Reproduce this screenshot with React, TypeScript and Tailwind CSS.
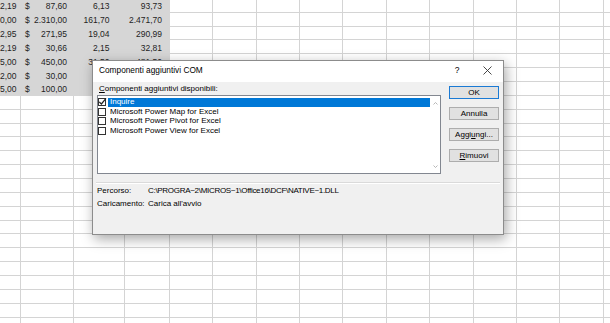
import React from 'react'

// righe visibili del foglio (colonne parziali a sinistra)
const rows: string[][] = [
  ['2,19', '87,60', '6,13', '93,73'],
  ['0,00', '2.310,00', '161,70', '2.471,70'],
  ['2,95', '271,95', '19,04', '290,99'],
  ['2,19', '30,66', '2,15', '32,81'],
  ['5,00', '450,00', '31,50', '481,50'],
  ['2,00', '30,00', '', ''],
  ['5,00', '100,00', '', ''],
]

const NUM_ROWS = 25
const NUM_COLS = 15

function Cell({ r, c }: { r: number; c: number }) {
  const selected = r < 7 && c < 4
  const base = selected
    ? 'bg-[#d6d6d6] border-[#d6d6d6]'
    : 'bg-white border-[#d4d4d4]'
  const data = r < 7 ? rows[r] : null

  let content: React.ReactNode = null
  if (data) {
    if (c === 0) content = <span className="ml-auto pr-[3.5px]">{data[0]}</span>
    if (c === 1)
      content = (
        <div className="flex w-full justify-between pl-[4.5px] pr-[6px]">
          <span>$</span>
          <span>{data[1]}</span>
        </div>
      )
    if (c === 2) content = <span className="ml-auto pr-[14px]">{data[2]}</span>
    if (c === 3) content = <span className="ml-auto pr-[7px]">{data[3]}</span>
  }

  return (
    <div
      className={`flex items-end overflow-hidden whitespace-nowrap border-r border-b pb-[0.5px] text-[8.5px] leading-[10px] text-[#1e1e1e] ${base}`}
    >
      {content}
    </div>
  )
}

function Sheet() {
  const cells = []
  for (let r = 0; r < NUM_ROWS; r++) {
    for (let c = 0; c < NUM_COLS; c++) {
      cells.push(<Cell key={`${r}-${c}`} r={r} c={c} />)
    }
  }
  return (
    <div className="-mt-[1.16px] grid grid-cols-[20.5px_53.5px_50.5px_45.5px_43px_43.5px_43.5px_43px_43.5px_43.5px_43.5px_43.5px_43px_44px_10px] auto-rows-[13.86px]">
      {cells}
    </div>
  )
}

function Checkbox({ checked }: { checked?: boolean }) {
  return (
    <div className="relative h-[8px] w-[8px] shrink-0 border border-[#333333] bg-white">
      {checked && (
        <svg className="absolute -left-[1px] -top-[2px]" width="9" height="9" viewBox="0 0 9 9">
          <path d="M1.2 4.8 L3.4 7 L8 1.4" fill="none" stroke="#222" strokeWidth="1.2" />
        </svg>
      )}
    </div>
  )
}

function Button({ children, primary }: { children: React.ReactNode; primary?: boolean }) {
  return (
    <div
      className={`flex h-[13px] w-[50px] items-center justify-center bg-[#e1e1e1] text-[8px] leading-none text-black ${
        primary ? 'border border-[#1b7ad4]' : 'border border-[#adadad]'
      }`}
    >
      {children}
    </div>
  )
}

const items = [
  'Inquire',
  'Microsoft Power Map for Excel',
  'Microsoft Power Pivot for Excel',
  'Microsoft Power View for Excel',
]

function Dialog() {
  return (
    <div className="absolute left-[92px] top-[60px] flex h-[175px] w-[412px] flex-col border border-[#8c8c8c] bg-[#f0f0f0] text-[8px] text-black shadow-[2px_4px_12px_rgba(0,0,0,0.35)]">
      {/* barra del titolo */}
      <div className="flex h-[21px] items-center bg-white pb-[2px] pl-[6px]">
        <span className="text-[8.3px]">Componenti aggiuntivi COM</span>
        <span className="ml-auto w-[8px] text-center text-[8.5px]">?</span>
        <svg className="ml-[22px] mr-[11px]" width="9" height="9" viewBox="0 0 9 9">
          <path d="M0.5 0.5 L8.5 8.5 M8.5 0.5 L0.5 8.5" stroke="#333" strokeWidth="0.9" />
        </svg>
      </div>

      {/* corpo */}
      <div className="flex flex-1 flex-col pt-[2px]">
        <div className="flex pl-[4px] pr-[4px]">
          <div className="flex w-[344px] flex-col">
            <div className="h-[10px] pl-[2px] leading-[10px]">
              <span className="underline decoration-[0.5px] underline-offset-1">C</span>omponenti aggiuntivi disponibili:
            </div>
            <div className="mt-[1px] flex h-[79px] border border-[#828790] bg-white">
              <div className="flex-1 pt-[1.5px]">
                {items.map((it, i) => (
                  <div key={it} className="flex h-[9.6px] items-center">
                    <Checkbox checked={i === 0} />
                    <div
                      className={`ml-[2px] flex h-full flex-1 items-center pl-[2px] leading-none ${
                        i === 0 ? 'bg-[#0078d7] text-white' : ''
                      }`}
                    >
                      {it}
                    </div>
                  </div>
                ))}
              </div>
              <div className="flex w-[10px] flex-col items-center justify-between pb-[5px] pt-[6px]">
                <svg width="5" height="3" viewBox="0 0 5 3">
                  <path d="M0.5 2.5 L2.5 0.5 L4.5 2.5" fill="none" stroke="#a6a6a6" strokeWidth="0.8" />
                </svg>
                <svg width="5" height="3" viewBox="0 0 5 3">
                  <path d="M0.5 0.5 L2.5 2.5 L4.5 0.5" fill="none" stroke="#a6a6a6" strokeWidth="0.8" />
                </svg>
              </div>
            </div>
          </div>
          <div className="ml-[8px] mt-[2px] flex flex-col gap-[8px]">
            <Button primary>OK</Button>
            <Button>Annulla</Button>
            <Button>
              Aggi<span className="underline decoration-[0.5px] underline-offset-1">u</span>ngi...
            </Button>
            <Button>
              <span className="underline decoration-[0.5px] underline-offset-1">R</span>imuovi
            </Button>
          </div>
        </div>

        <div className="mx-[3px] mt-[8px] border-t border-b border-t-[#dadada] border-b-white" />

        <div className="flex flex-col pl-[4px] pt-[1px]">
          <div className="flex h-[12.6px] items-center">
            <span className="w-[51px]">Percorso:</span>
            <span className="tracking-[-0.3px]">C:\PROGRA~2\MICROS~1\Office16\DCF\NATIVE~1.DLL</span>
          </div>
          <div className="flex h-[12.6px] items-center">
            <span className="w-[51px]">Caricamento:</span>
            <span>Carica all'avvio</span>
          </div>
        </div>
      </div>
    </div>
  )
}

export default function App() {
  return (
    <div className="relative h-[323px] w-[610px] overflow-hidden bg-white font-['Liberation_Sans',Arial,sans-serif]">
      <Sheet />
      <Dialog />
    </div>
  )
}
